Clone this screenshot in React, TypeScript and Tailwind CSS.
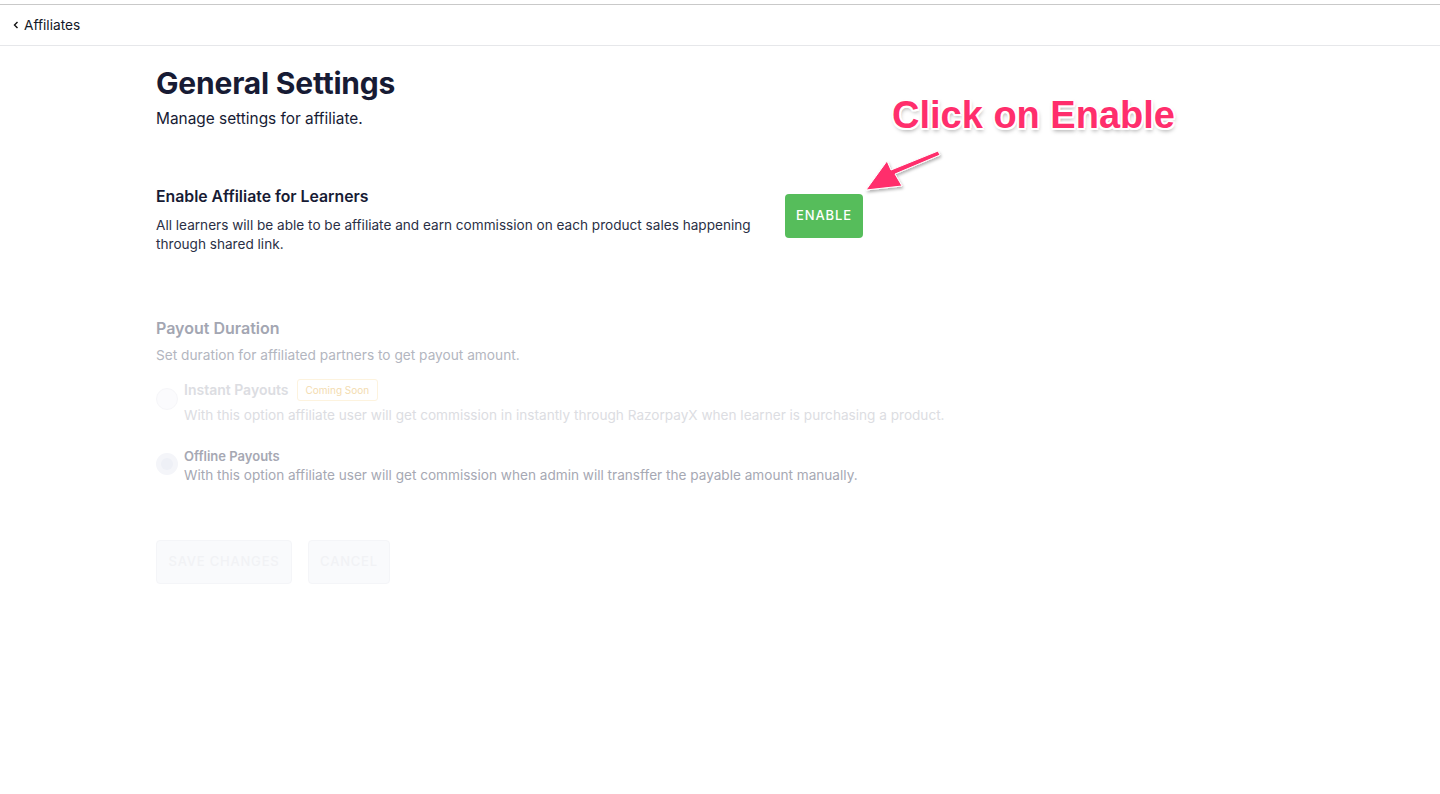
import React from "react";

export default function App() {
  return (
    <div className="relative w-[1440px] h-[794px] bg-white overflow-hidden" style={{ fontFamily: "Inter, 'Noto Sans', sans-serif" }}>
      <div className="h-[4px]" />
      <div className="border-t border-[#c9c9c9] border-b border-b-[#e6e7ea] h-[42px] flex items-center pl-[12px] text-[13.7px] text-[#111827]">
        <svg width="8" height="10" viewBox="0 0 8 10" className="mr-[4px]">
          <path d="M5.5 2 L2.5 5 L5.5 8" fill="none" stroke="#111" strokeWidth="1.4" />
        </svg>
        <span>Affiliates</span>
      </div>

      <div className="pl-[156px]">
        <h1 className="mt-[19px] text-[30px] leading-[36px] font-bold text-[#171b34] tracking-[-0.2px]">General Settings</h1>
        <p className="mt-[8px] text-[15.4px] leading-[20px] text-[#171b34]">Manage settings for affiliate.</p>

        <div className="mt-[58px] flex items-start">
          <div className="w-[629px]">
            <div className="text-[15.8px] leading-[20px] font-semibold text-[#171b34]">Enable Affiliate for Learners</div>
            <p className="mt-[9px] text-[13.6px] leading-[19px] text-[#2a2f45] w-[620px]">
              All learners will be able to be affiliate and earn commission on each product sales happening through shared link.
            </p>
          </div>
          <button className="mt-[7px] w-[78px] h-[44px] rounded-[4px] bg-[#56bd5b] text-white text-[13px] tracking-[0.9px] font-medium">ENABLE</button>
        </div>

        <div className="mt-[64px] text-[16px] leading-[20px] font-semibold text-[#a3a6b2]">Payout Duration</div>
        <p className="mt-[8px] text-[13.7px] leading-[18px] text-[#b3b6c0]">Set duration for affiliated partners to get payout amount.</p>

        <div className="mt-[15px] flex items-start">
          <div className="mt-[9px] w-[22px] h-[22px] rounded-full border border-[#f6f6f9] bg-[#fbfbfd]" />
          <div className="ml-[6px]">
            <div className="flex items-center">
              <span className="text-[14px] leading-[18px] font-semibold text-[#dcdde2]">Instant Payouts</span>
              <span className="ml-[8px] h-[22px] px-[8px] flex items-center rounded-[3px] border border-[#fdf3de] text-[10px] text-[#f3dcb0]">Coming Soon</span>
            </div>
            <p className="mt-[5px] text-[13.6px] leading-[18px] text-[#dcdde2]">With this option affiliate user will get commission in instantly through RazorpayX when learner is purchasing a product.</p>
          </div>
        </div>

        <div className="mt-[24px] flex items-start">
          <div className="mt-[5px] w-[22px] h-[22px] rounded-full bg-[#f4f5f9] flex items-center justify-center">
            <div className="w-[12px] h-[12px] rounded-full bg-[#eef0f6]" />
          </div>
          <div className="ml-[6px]">
            <div className="text-[13px] leading-[16px] font-semibold text-[#a6a8b3]">Offline Payouts</div>
            <p className="mt-[2px] text-[13.6px] leading-[18px] text-[#a6a8b3]">With this option affiliate user will get commission when admin will transffer the payable amount manually.</p>
          </div>
        </div>

        <div className="mt-[56px] flex gap-[16px]">
          <button className="w-[136px] h-[44px] rounded-[4px] border border-[#f4f5f8] bg-[#f9fafc] text-[13px] tracking-[0.8px] font-medium text-[#f1f2f5]">SAVE CHANGES</button>
          <button className="w-[82px] h-[44px] rounded-[4px] border border-[#f4f5f8] bg-[#f9fafc] text-[13px] tracking-[0.8px] font-medium text-[#f1f2f5]">CANCEL</button>
        </div>
      </div>

      {/* annotation */}
      <div
        className="absolute left-[892px] top-[92px] text-[38px] leading-[46px] font-bold text-[#ff2e6c] whitespace-nowrap"
        style={{
          fontFamily: "'Liberation Sans', Arial, sans-serif",
          textShadow:
            "2px 0 0 #fff, -2px 0 0 #fff, 0 2px 0 #fff, 0 -2px 0 #fff, 1.5px 1.5px 0 #fff, -1.5px -1.5px 0 #fff, 1.5px -1.5px 0 #fff, -1.5px 1.5px 0 #fff, 1px 3px 4px rgba(0,0,0,0.35)",
        }}
      >
        Click on Enable
      </div>
      <svg className="absolute left-[860px] top-[146px]" width="86" height="52" viewBox="0 0 86 52">
        <defs>
          <filter id="sh" x="-20%" y="-20%" width="140%" height="160%">
            <feDropShadow dx="1" dy="2" stdDeviation="1.5" floodColor="#000" floodOpacity="0.3" />
          </filter>
        </defs>
        <path
          d="M78 5 L80 9 L35 28 L42 40 L6 44 L27 15 L31 24 Z"
          fill="#ff2e6c"
          stroke="#fff"
          strokeWidth="1"
          strokeLinejoin="round"
          filter="url(#sh)"
        />
      </svg>
    </div>
  );
}
